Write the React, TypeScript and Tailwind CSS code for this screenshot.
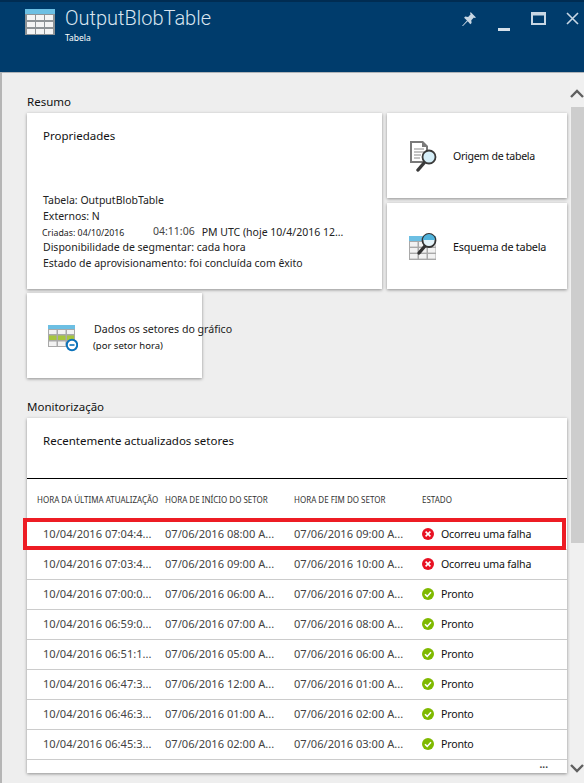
import React from 'react';

const rows = [
  { updated: '10/04/2016 07:04:4...', start: '07/06/2016 08:00 A...', end: '07/06/2016 09:00 A...', ok: false },
  { updated: '10/04/2016 07:03:4...', start: '07/06/2016 09:00 A...', end: '07/06/2016 10:00 A...', ok: false },
  { updated: '10/04/2016 07:00:0...', start: '07/06/2016 06:00 A...', end: '07/06/2016 07:00 A...', ok: true },
  { updated: '10/04/2016 06:59:0...', start: '07/06/2016 07:00 A...', end: '07/06/2016 08:00 A...', ok: true },
  { updated: '10/04/2016 06:51:1...', start: '07/06/2016 05:00 A...', end: '07/06/2016 06:00 A...', ok: true },
  { updated: '10/04/2016 06:47:3...', start: '07/06/2016 12:00 A...', end: '07/06/2016 01:00 A...', ok: true },
  { updated: '10/04/2016 06:46:3...', start: '07/06/2016 01:00 A...', end: '07/06/2016 02:00 A...', ok: true },
  { updated: '10/04/2016 06:45:3...', start: '07/06/2016 02:00 A...', end: '07/06/2016 03:00 A...', ok: true },
];

const TableIcon = () => (
  <svg width="30" height="26" viewBox="0 0 30 26">
    <rect x="0" y="0" width="30" height="26" fill="#8e9396" />
    <rect x="0" y="0" width="30" height="5" fill="#6cbfe3" />
    {[6, 13, 20].map((y) =>
      [2, 11, 20].map((x) => <rect key={`${x}-${y}`} x={x} y={y} width="8" height="5" fill="#f4f4f4" />)
    )}
  </svg>
);

const SourceIcon = () => (
  <svg className="shrink-0" width="30" height="32" viewBox="0 0 30 32">
    <path d="M1 1h13l5 5v17H1z" fill="#7a7a7a" />
    <path d="M3 3h10v4h4v14H3z" fill="#fff" />
    <path d="M5 9h10M5 12h10M5 15h7M5 18h6" stroke="#8a8a8a" strokeWidth="1.2" />
    <path d="M9 30l6-7" stroke="#3a3a3a" strokeWidth="3.4" strokeLinecap="round" />
    <circle cx="20" cy="17" r="6.5" fill="#d5eef8" stroke="#3a3a3a" strokeWidth="1.8" />
  </svg>
);

const SchemaIcon = () => (
  <svg className="shrink-0" width="30" height="27" viewBox="0 0 30 27">
    <rect x="0" y="3" width="27" height="24" fill="#a9a9a9" />
    <rect x="0" y="3" width="27" height="5" fill="#6cbfe3" />
    {[9, 15, 21].map((y) =>
      [1, 10, 19].map((x) => <rect key={`${x}-${y}`} x={x} y={y} width="7.5" height="4.6" fill="#f2f2f2" />)
    )}
    <path d="M10 20l6-7" stroke="#333" strokeWidth="3.4" strokeLinecap="round" />
    <circle cx="20" cy="7.5" r="6.5" fill="#e4f3f9" stroke="#333" strokeWidth="1.8" />
    <path d="M14 7a6 6 0 0 1 12 0z" fill="#4fb3dc" />
  </svg>
);

const ChartIcon = () => (
  <svg className="mt-[5px] shrink-0" width="30" height="27" viewBox="0 0 30 27">
    <rect x="0" y="0" width="27" height="22" fill="#a9a9a9" />
    <rect x="0" y="0" width="27" height="4" fill="#6cbfe3" />
    <rect x="1" y="5" width="7.5" height="4" fill="#f2f2f2" />
    <rect x="10" y="5" width="7.5" height="4" fill="#f2f2f2" />
    <rect x="19" y="5" width="7" height="4" fill="#f2f2f2" />
    <rect x="1" y="10.5" width="7.5" height="4.5" fill="#a6c63d" />
    <rect x="10" y="10.5" width="7.5" height="4.5" fill="#a6c63d" />
    <rect x="19" y="10.5" width="7" height="4.5" fill="#a6c63d" />
    <rect x="1" y="16.5" width="7.5" height="4.5" fill="#f2f2f2" />
    <rect x="10" y="16.5" width="7.5" height="4.5" fill="#f2f2f2" />
    <circle cx="24" cy="20" r="5.2" fill="#fff" stroke="#0a72ba" strokeWidth="2" />
    <path d="M21.5 20h5" stroke="#0a72ba" strokeWidth="1.6" />
  </svg>
);

const StatusIcon = ({ ok }: { ok: boolean }) =>
  ok ? (
    <svg width="12" height="12" viewBox="0 0 12 12">
      <circle cx="6" cy="6" r="6" fill="#7fb900" />
      <path d="M3 6.2l2.2 2.2L9 4.2" fill="none" stroke="#fff" strokeWidth="1.5" />
    </svg>
  ) : (
    <svg width="12" height="12" viewBox="0 0 12 12">
      <circle cx="6" cy="6" r="6" fill="#e81123" />
      <path d="M3.6 3.6l4.8 4.8M8.4 3.6l-4.8 4.8" fill="none" stroke="#fff" strokeWidth="1.6" />
    </svg>
  );

const App: React.FC = () => {
  return (
    <div className="relative w-[584px] h-[783px] overflow-hidden bg-[#eeeeee] text-[#111] font-['Noto_Sans',sans-serif]">
      <header className="flex h-[73px] border-t-2 border-b border-t-[#002c52] border-b-[#b0b4b8] bg-[#003c6c] pt-[7px]">
        <div className="ml-[25px]">
          <TableIcon />
        </div>
        <div className="ml-[10px]">
          <div className="-mt-[1px] text-[20px] leading-[20px] font-light text-[#d9e5f0] font-['Roboto',sans-serif]">OutputBlobTable</div>
          <div className="mt-[4px] text-[8.5px] leading-[12px] text-white">Tabela</div>
        </div>
        <div className="ml-auto flex text-[#c8d7e4]">
          <svg className="mt-[2px]" width="16" height="16" viewBox="0 0 16 16" fill="currentColor">
            <path d="M9.6 1l5.4 5.4-1.3.7-.8-.5-2.6 2.6.3 2.9-1.3 1.1-2.6-3L2 15l-1 .1 5-5.6-2.9-2.7 1.1-1.2 2.9.3 2.6-2.7-.6-.8z" />
          </svg>
          <div className="ml-[21px] mt-[19px] h-[3px] w-[12px] bg-[#d5e0ea]" />
          <svg className="ml-[21px] mt-[3px]" width="15" height="13" viewBox="0 0 15 13">
            <rect x="1" y="1" width="13" height="11" fill="none" stroke="currentColor" strokeWidth="2" />
            <rect x="1" y="1" width="13" height="2.5" fill="currentColor" />
          </svg>
          <svg className="ml-[20px] mr-[5px] mt-[3px]" width="13" height="13" viewBox="0 0 13 13">
            <path d="M1 1l11 11M12 1L1 12" stroke="currentColor" strokeWidth="1.6" />
          </svg>
        </div>
      </header>

      <div className="flex h-[710px]">
        <main className="w-[570px] border-l-2 border-l-[#b5b5b5] pl-[25px] pr-[3px]">
          <h2 className="mt-[20px] h-[20px] text-[11.5px] leading-[17px]">Resumo</h2>

          <div className="flex gap-[5px]">
            <section className="h-[176px] w-[355px] overflow-hidden bg-white pl-[16px] pt-[14px] shadow-[0_1px_3px_rgba(0,0,0,0.4)]">
              <h3 className="text-[11.5px] leading-[17px]">Propriedades</h3>
              <div className="mt-[48px] text-[10.5px] leading-[16px] text-[#222]">
                <div>Tabela: OutputBlobTable</div>
                <div>Externos: N</div>
                <div className="flex h-[15px] items-baseline whitespace-nowrap">
                  <span className="w-[111px] -ml-[1px] text-[8.8px]">Criadas: 04/10/2016</span>
                  <span className="-translate-y-[1px] text-[#444]">04:11:06</span>
                  <span className="ml-[7px]">PM UTC (hoje 10/4/2016 12...</span>
                </div>
                <div>Disponibilidade de segmentar: cada hora</div>
                <div>Estado de aprovisionamento: foi concluída com êxito</div>
              </div>
            </section>

            <div className="flex w-[180px] flex-col gap-[5px]">
              <button className="flex h-[85px] items-center bg-white pl-[22px] text-left shadow-[0_1px_3px_rgba(0,0,0,0.4)]">
                <SourceIcon />
                <span className="ml-[14px] mt-[3px] text-[10.6px] tracking-[-0.3px]">Origem de tabela</span>
              </button>
              <button className="flex h-[86px] items-center bg-white pl-[22px] text-left shadow-[0_1px_3px_rgba(0,0,0,0.4)]">
                <SchemaIcon />
                <span className="ml-[14px] mt-[2px] text-[10.8px] tracking-[-0.2px]">Esquema de tabela</span>
              </button>
            </div>
          </div>

          <button className="mt-[4px] flex h-[85px] w-[175px] items-center whitespace-nowrap bg-white pl-[21px] text-left shadow-[0_1px_3px_rgba(0,0,0,0.4)]">
            <ChartIcon />
            <div className="ml-[16px] mt-[1px]">
              <div className="text-[10.6px] leading-[16px] text-[#222]">Dados os setores do gráfico</div>
              <div className="mt-[3px] -ml-[1px] text-[9.5px] leading-[12px]">(por setor hora)</div>
            </div>
          </button>

          <h2 className="mt-[20px] h-[20px] text-[11.5px] leading-[17px]">Monitorização</h2>

          <section className="h-[355px] bg-white shadow-[0_1px_3px_rgba(0,0,0,0.4)]">
            <div className="h-[61px] border-b border-b-black pl-[16px] pt-[14px] text-[11.5px] leading-[17px]">
              Recentemente actualizados setores
            </div>
            <div className="grid h-[41px] grid-cols-[128px_129px_128px_1fr] items-center whitespace-nowrap pl-[10px] text-[8px] text-[#333]">
              <span>HORA DA ÚLTIMA ATUALIZAÇÃO</span>
              <span>HORA DE INÍCIO DO SETOR</span>
              <span>HORA DE FIM DO SETOR</span>
              <span>ESTADO</span>
            </div>
            {rows.map((row, index) => (
              <div
                key={index}
                className="grid h-[30px] grid-cols-[122px_129px_128px_1fr] items-center border-b border-b-[#cccccc] whitespace-nowrap pl-[16px] text-[11.1px] text-[#444]"
              >
                <span>{row.updated}</span>
                <span>{row.start}</span>
                <span>{row.end}</span>
                <span className="flex items-center text-[#111] text-[10.6px]">
                  <StatusIcon ok={row.ok} />
                  <span className="ml-[7px] tracking-[-0.2px]">{row.ok ? 'Pronto' : 'Ocorreu uma falha'}</span>
                </span>
              </div>
            ))}
            <div className="pr-[19px] text-right text-[10px] leading-[9px] font-bold text-[#444]">...</div>
          </section>
        </main>

        <aside className="flex w-[14px] flex-col items-center bg-[#f0f0f0]">
          <svg className="mt-[16px]" width="14" height="10" viewBox="0 0 14 10">
            <path d="M1 8l6-6 6 6" fill="none" stroke="#606060" strokeWidth="2.4" />
          </svg>
          <div className="mt-[8px] h-[436px] w-[13px] self-end bg-[#cdcdcd]" />
          <svg className="mt-[220px]" width="14" height="10" viewBox="0 0 14 10">
            <path d="M1 2l6 6 6-6" fill="none" stroke="#606060" strokeWidth="2.4" />
          </svg>
        </aside>
      </div>

      <div className="absolute left-[23px] top-[518px] h-[32px] w-[543px] border-4 border-[#ed1c24]" />
    </div>
  );
};

export default App;
